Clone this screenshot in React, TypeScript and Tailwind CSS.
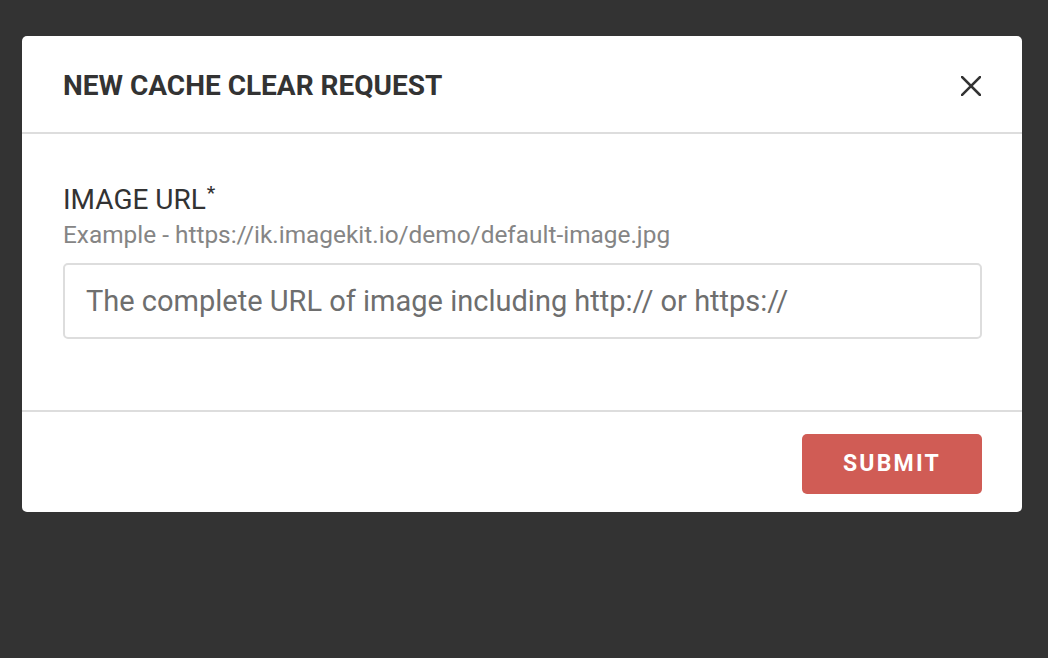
export default function App() {
  return (
    <div className="w-[1048px] h-[658px] bg-[#333333] pt-[36px] pl-[22px] font-['Roboto',sans-serif] overflow-hidden">
      <div className="w-[1000px] bg-white rounded-[5px] flex flex-col">
        {/* header */}
        <div className="h-[98px] flex items-center justify-between pl-[41px] pr-[41px] border-b-2 border-[#dddddd]">
          <h2 className="text-[28px] font-bold text-[#333333] pt-[4px]">NEW CACHE CLEAR REQUEST</h2>
          <svg width="20" height="20" viewBox="0 0 20 20" className="mt-[4px]">
            <path d="M1 1 L19 19 M19 1 L1 19" stroke="#333333" strokeWidth="2.5" strokeLinecap="square" />
          </svg>
        </div>

        {/* body */}
        <div className="px-[41px] pt-[50px] pb-[71px]">
          <label className="block text-[28px] leading-[32px] text-[#333333]">
            IMAGE URL<sup className="text-[19px] font-medium relative -top-[10px] ml-[1px]">*</sup>
          </label>
          <p className="text-[24.4px] leading-[28px] text-[#858585] mt-[5px]">
            Example - https://ik.imagekit.io/demo/default-image.jpg
          </p>
          <input
            className="mt-[14px] w-[919px] h-[76px] border-2 border-[#dddddd] rounded-[5px] px-[21px] text-[29px] text-[#333333] placeholder:text-[#6e6e6e] outline-none"
            placeholder="The complete URL of image including http:// or https://"
          />
        </div>

        {/* footer */}
        <div className="h-[102px] border-t-2 border-[#dddddd] flex items-center justify-end pr-[40px] pt-[4px]">
          <button className="w-[180px] h-[60px] bg-[#d05c55] rounded-[5px] text-white text-[23px] font-bold tracking-[2.2px]">
            SUBMIT
          </button>
        </div>
      </div>
    </div>
  );
}
